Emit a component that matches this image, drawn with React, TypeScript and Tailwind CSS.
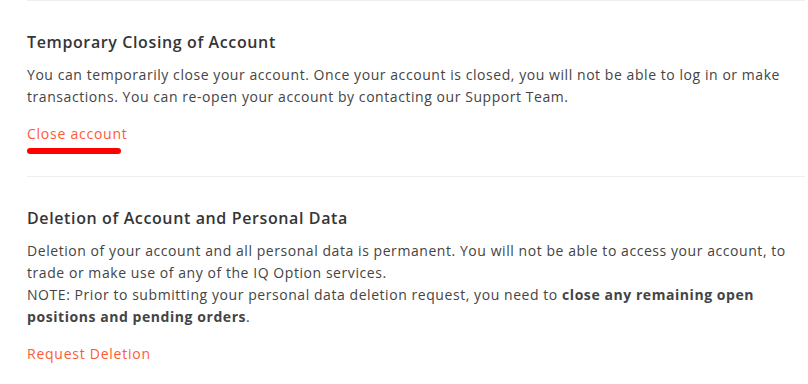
export default function App() {
  return (
    <main className="min-h-screen bg-white font-['Open_Sans',sans-serif] text-[14px] leading-[22px] tracking-[0.56px] text-[#444444]">
      <div className="pl-[27px] pr-[3px]">
        <section className="border-t border-[#eeeeee] pt-[29px] pb-[22px]">
          <h2 className="text-[16px] leading-[24px] font-semibold tracking-[0.62px] text-[#353535]">Temporary Closing of Account</h2>
          <p className="mt-[10px]">
            You can temporarily close your account. Once your account is closed, you will not be able to log in or make
            transactions. You can re-open your account by contacting our Support Team.
          </p>
          <a href="#" className="mt-[15px] block w-fit tracking-[0.75px] text-[#ff5a36]">Close account</a>
          <div className="mt-[3px] h-[6px] w-[94px] rounded-full bg-[#ff0000]" />
        </section>

        <section className="border-t border-[#eeeeee] pt-[29px]">
          <h2 className="text-[16px] leading-[24px] font-semibold tracking-[0.62px] text-[#353535]">Deletion of Account and Personal Data</h2>
          <p className="mt-[10px]">
            Deletion of your account and all personal data is permanent. You will not be able to access your account, to
            trade or make use of any of the IQ Option services.
            <br />
            NOTE: Prior to submitting your personal data deletion request, you need to{" "}
            <b className="font-bold">close any remaining open positions and pending orders</b>.
          </p>
          <a href="#" className="mt-[15px] block w-fit tracking-[0.75px] text-[#ff5a36]">Request Deletion</a>
        </section>
      </div>
    </main>
  );
}
